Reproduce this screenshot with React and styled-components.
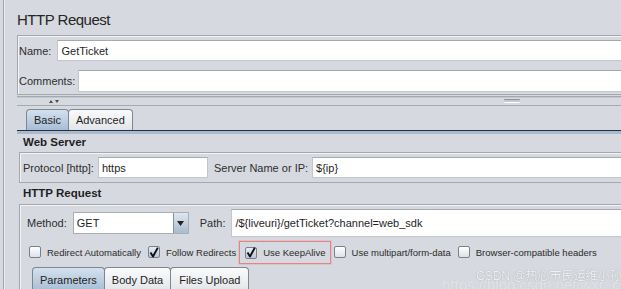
import React from 'react';
import styled, { createGlobalStyle } from 'styled-components';

const GlobalStyle = createGlobalStyle`
  html, body {
    margin: 0;
    padding: 0;
    background: #d6d9df;
    overflow: hidden;
  }
  body {
    font-family: "Liberation Sans", Arial, sans-serif;
    color: #2e2e2e;
  }
`;

const Window = styled.div`
  position: relative;
  width: 720px;
  height: 289px;
  padding-left: 3px;
  box-sizing: border-box;
  overflow: hidden;
`;

const Frame = styled.div`
  height: 100%;
  border-left: 1px solid #9fa3aa;
  box-shadow: inset 1px 0 0 #eceef1;
  padding-left: 13px;
`;

const Title = styled.h1`
  margin: 0;
  padding-top: 11px;
  margin-bottom: 7px;
  font-size: 15px;
  line-height: 17px;
  font-weight: 400;
  letter-spacing: -0.5px;
  color: #262626;
`;

const Panel = styled.div`
  border: 1px solid #a3a7ae;
  border-right: none;
  box-shadow: inset 1px 1px 0 #f3f4f6;
  padding: ${p => p.$pad};
  display: flex;
  flex-direction: column;
  gap: ${p => p.$gap || 0}px;
`;

const Row = styled.div`
  display: flex;
  align-items: center;
  gap: ${p => p.$gap ?? 3}px;
  height: ${p => p.$h}px;
`;

const Label = styled.span`
  font-size: 11px;
  white-space: pre;
  margin-left: ${p => p.$ml || 0}px;
`;

const TextBox = styled.div`
  box-sizing: border-box;
  height: ${p => p.$h || 21}px;
  width: ${p => (p.$w ? p.$w + 'px' : 'auto')};
  flex: ${p => (p.$w ? 'none' : 1)};
  background: #fff;
  border: 1px solid #c3c6cb;
  border-top-color: #a5a9b0;
  padding-left: 3px;
  display: flex;
  align-items: center;
  font-size: 11px;
  color: #1e1e1e;
`;

const Divider = styled.div`
  margin-top: 1px;
  height: 8px;
  border-top: 1px solid #a5a9b0;
  border-bottom: 1px solid #a5a9b0;
  box-shadow: inset 0 1px 0 #c4c7cc;
  display: flex;
  align-items: center;
  padding-left: 31px;
`;

const Grip = styled.div`
  margin-left: 444px;
  width: 16px;
  height: 4px;
  box-sizing: border-box;
  border-top: 1px solid #8d9198;
  border-bottom: 1px solid #ffffff;
  background: #c6c9ce;
  border-radius: 1px;
`;

const TabStrip = styled.div`
  margin-top: ${p => p.$mt ?? 3}px;
  display: flex;
  padding-left: ${p => p.$pl}px;
  border-bottom: ${p => (p.$line ? '1px solid #26313d' : 'none')};
`;

const Tab = styled.div`
  height: ${p => p.$h}px;
  box-sizing: border-box;
  padding: 0 ${p => p.$px}px;
  display: flex;
  align-items: center;
  font-size: 11px;
  color: #1e1e1e;
  border: 1px solid #7e8692;
  border-bottom: none;
  border-radius: 4px 4px 0 0;
  margin-right: -1px;
  background: ${p =>
    p.$active
      ? 'linear-gradient(#d4e1ee, #a7bdd5)'
      : 'linear-gradient(#fbfbfc, #e2e5e9)'};
`;

const TabBand = styled.div`
  height: 3px;
  background: #aabbd0;
`;

const TabBody = styled.div`
  padding-left: 2px;
`;

const SectionTitle = styled.div`
  margin: ${p => p.$mt}px 0 ${p => p.$mb}px 4px;
  font-size: 11.5px;
  line-height: 14px;
  font-weight: 700;
  color: #1e1e1e;
`;

const Combo = styled.div`
  width: 116px;
  height: 22px;
  box-sizing: border-box;
  display: flex;
  background: #fff;
  border: 1px solid #a9adb4;
`;

const ComboText = styled.div`
  flex: 1;
  display: flex;
  align-items: center;
  padding-left: 3px;
  font-size: 11px;
  color: #1e1e1e;
`;

const ComboButton = styled.div`
  width: 14px;
  border-left: 1px solid #8a929d;
  background: linear-gradient(#dfe7f0, #a9bbcf);
  display: flex;
  align-items: center;
  justify-content: center;
`;

const CheckRow = styled.div`
  margin: 8px 0 0 2px;
  height: 14px;
  display: flex;
  align-items: center;
  gap: 7px;
`;

const CheckItem = styled.label`
  display: flex;
  align-items: center;
  gap: 6px;
  font-size: 9.5px;
  color: #2a2a2a;
  white-space: nowrap;
`;

const Box = styled.span`
  width: 12px;
  height: 12px;
  box-sizing: border-box;
  border: 1px solid #7a808a;
  border-radius: 2px;
  background: ${p =>
    p.$checked ? 'linear-gradient(#e6edf5, #b6c7da)' : 'linear-gradient(#ffffff, #dde1e6)'};
  display: flex;
  align-items: center;
  justify-content: center;
`;

const Highlight = styled.div`
  margin: -5px -4px;
  padding: 5px 4px 4px 5px;
  border: 1px solid #e48585;
  box-shadow: 0 0 0 0.5px rgba(228, 133, 133, 0.5);
  display: flex;
`;

const Watermark = styled.div`
  position: absolute;
  left: ${p => p.$x}px;
  top: ${p => p.$y}px;
  font-size: ${p => p.$size}px;
  line-height: 1;
  white-space: nowrap;
  color: ${p => p.$color};
  text-shadow: ${p => p.$shadow};
  font-family: "Liberation Sans", "Noto Sans CJK SC", sans-serif;
`;

const SplitArrows = () => (
  <svg width="12" height="5" viewBox="0 0 12 5">
    <path d="M1 4 L3 1 L5 4 Z" fill="#4a4f57" />
    <path d="M7 1 L11 1 L9 4 Z" fill="#4a4f57" />
  </svg>
);

const DownArrow = () => (
  <svg width="7" height="5" viewBox="0 0 7 5">
    <path d="M0 0 L7 0 L3.5 5 Z" fill="#222" />
  </svg>
);

const Tick = () => (
  <svg width="10" height="11" viewBox="0 0 10 11">
    <path d="M1.5 5.5 L4 9.5 L8.8 0.8" fill="none" stroke="#111" strokeWidth="1.9" strokeLinejoin="round" />
  </svg>
);

const Check = ({ checked, children }) => (
  <CheckItem>
    <Box $checked={checked}>{checked && <Tick />}</Box>
    {children}
  </CheckItem>
);

export default function App() {
  return (
    <Window>
      <GlobalStyle />
      <Frame>
        <Title>HTTP Request</Title>

        <Panel $pad="4px 0 2px 1px" $gap={9}>
          <Row>
            <Label>Name: </Label>
            <TextBox>GetTicket</TextBox>
          </Row>
          <Row>
            <Label>Comments:</Label>
            <TextBox $h={22} />
          </Row>
        </Panel>

        <Divider>
          <SplitArrows />
          <Grip />
        </Divider>

        <TabStrip $pl={9} $line>
          <Tab $h={21} $px={7} $active>Basic</Tab>
          <Tab $h={21} $px={7}>Advanced</Tab>
        </TabStrip>
        <TabBand />

        <TabBody>
          <SectionTitle $mt={1} $mb={3}>Web Server</SectionTitle>
          <Panel $pad="4px 0 4px 3px">
            <Row $gap={4}>
              <Label>Protocol [http]:</Label>
              <TextBox $w={110}>https</TextBox>
              <Label $ml={2}>Server Name or IP:</Label>
              <TextBox>{'${ip}'}</TextBox>
            </Row>
          </Panel>

          <SectionTitle $mt={3} $mb={4}>HTTP Request</SectionTitle>
          <Panel $pad="4px 0 0 7px">
            <Row $gap={6} $h={28}>
              <Label>Method:</Label>
              <Combo>
                <ComboText>GET</ComboText>
                <ComboButton>
                  <DownArrow />
                </ComboButton>
              </Combo>
              <Label $ml={5}>Path:</Label>
              <TextBox $h={28}>{'/${liveuri}/getTicket?channel=web_sdk'}</TextBox>
            </Row>

            <CheckRow>
              <Check>Redirect Automatically</Check>
              <Check checked>Follow Redirects</Check>
              <Highlight>
                <Check checked>Use KeepAlive</Check>
              </Highlight>
              <Check>Use multipart/form-data</Check>
              <Check>Browser-compatible headers</Check>
            </CheckRow>

            <TabStrip $pl={5} $mt={8}>
              <Tab $h={24} $px={7} $active>Parameters</Tab>
              <Tab $h={24} $px={7}>Body Data</Tab>
              <Tab $h={24} $px={8}>Files Upload</Tab>
            </TabStrip>
          </Panel>
        </TabBody>
      </Frame>

      <Watermark
        $x={442}
        $y={277}
        $size={15}
        $color="rgba(255,255,255,0.5)"
        $shadow="0 0 1px rgba(120,120,120,0.2)"
      >
        https://blog.csdn.net/wxr_csdn
      </Watermark>
      <Watermark
        $x={476}
        $y={270}
        $size={12}
        $color="rgba(250,250,250,0.92)"
        $shadow="0 0 1px rgba(90,90,90,0.55)"
      >
        CSDN @热心市民运维小孙
      </Watermark>
    </Window>
  );
}
